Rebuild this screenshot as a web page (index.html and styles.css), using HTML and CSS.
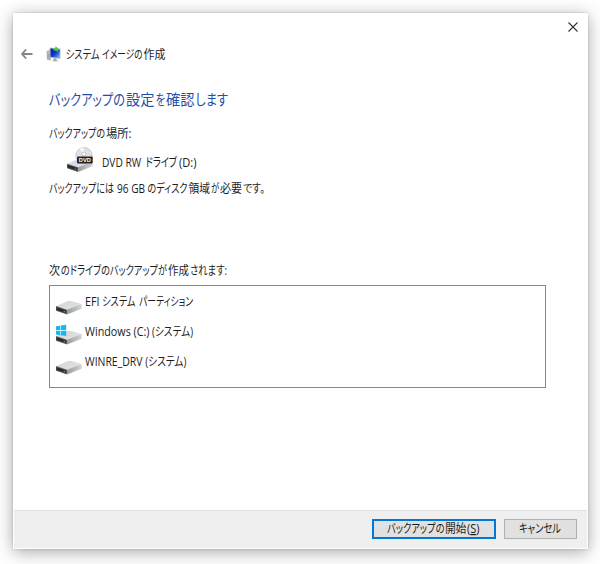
FILE: index.html
```html
<!DOCTYPE html>
<html lang="ja">
<head>
<meta charset="utf-8">
<title>システム イメージの作成</title>
<link rel="stylesheet" href="styles.css">
</head>
<body>
<svg width="0" height="0" class="defs" aria-hidden="true">
  <defs>
    <linearGradient id="top" x1="0" y1="0" x2="1" y2="1"><stop offset="0" stop-color="#d2d4d5"/><stop offset="1" stop-color="#e4e4e6"/></linearGradient>
    <linearGradient id="side" x1="0" y1="0" x2="1" y2="0"><stop offset="0" stop-color="#989a9b"/><stop offset="1" stop-color="#d2d3d4"/></linearGradient>
    <linearGradient id="screen" x1="0" y1="0" x2="1" y2="1"><stop offset="0" stop-color="#0719a5"/><stop offset=".5" stop-color="#1535c8"/><stop offset="1" stop-color="#70bff5"/></linearGradient>
    <symbol id="drive" viewBox="0 0 26 14">
      <path d="M0 5.6 12 0.2Q13 -.1 14 .1L25.6 3.4 11 9.4Z" fill="url(#top)"/>
      <path d="M11 9 25.6 3.4V8L11 13.8Z" fill="url(#side)"/>
      <path d="M0 5.4 11 9V13.7L0 10Z" fill="#5b5d5e"/>
      <path d="M.6 6.5 10.2 9.7V12.4L.6 9.3Z" fill="#292c2d"/>
      <path d="M7.7 10 9.1 10.4V11.6L7.7 11.2Z" fill="#38b637"/>
    </symbol>
  </defs>
</svg>
<main class="dialog">
  <header>
    <div class="closebar">
      <svg class="close" width="10" height="10" viewBox="0 0 10 10"><path d="M.5.5 9.5 9.5M9.5.5.5 9.5" fill="none" stroke="#333" stroke-width="1.1"/></svg>
    </div>
    <div class="caption">
      <svg class="back" width="12" height="10" viewBox="0 0 12 10"><path d="M5.2.5.9 5 5.2 9.5M1 5H11.5" fill="none" stroke="#858585" stroke-width="1.8"/></svg>
      <svg class="app" width="16" height="16" viewBox="0 0 16 16">
        <path d="M.5 5 3.5 4 5 5V14.5L1 13.8Z" fill="#b3b5b5"/><path d="M1 9H4M1 11H4" stroke="#858989" stroke-width=".7"/>
        <path d="M3.5 1.5 14.5 2.5V13L3.5 11.7Z" fill="#b9c3cc"/><path d="M4.5 2.5 13.7 3.4V12L4.5 10.8Z" fill="url(#screen)"/>
        <path d="M7.5 12.3H10.5V14L13 15.3H6L7.5 14Z" fill="#a5a8aa"/>
        <path d="M7.2 4.5Q7.5 1.7 9.5 1.5V0L13 3.3 10.8 6.7V4.8Q9 4.4 7.2 4.5Z" fill="#52cf3f"/>
      </svg>
      <svg class="line" width="102" height="18"><text x=".5" y="13" textLength="34">システム</text><text x="37" y="13" textLength="40.5">イメージの</text><text x="78.5" y="13" textLength="22">作成</text></svg>
    </div>
  </header>
  <section class="content">
    <h1><svg class="line" width="182" height="20"><text x="0" y="14" textLength="76">バックアップの</text><text x="77" y="14" textLength="28.5">設定</text><text x="106.5" y="14" textLength="9.5">を</text><text x="117" y="14" textLength="28.5">確認</text><text x="146.5" y="14" textLength="32.5">します</text></svg></h1>
    <p class="place"><svg class="line" width="90" height="18"><text x="0" y="13.5" textLength="56">バックアップの</text><text x="57" y="13.5" textLength="25.5">場所:</text></svg></p>
    <div class="destination">
      <svg width="27" height="26" viewBox="0 0 27 26">
        <use href="#drive" x="0" y="11.3" width="26" height="14"/>
        <circle cx="17" cy="8.7" r="8.2" fill="#dfe1e2" stroke="#b8babb" stroke-width=".7"/>
        <path d="M17 8 12.5 1.8A8 8 0 0 1 17 .8Z" fill="#f6f6f6"/>
        <circle cx="17" cy="7" r="2" fill="#fff" stroke="#aaadae" stroke-width=".7"/>
        <rect x="10" y="9.5" width="15.7" height="7" rx="1" fill="#222425"/>
        <text x="11.8" y="15.2" class="disc-label" textLength="12">DVD</text>
      </svg>
      <svg class="line" width="96" height="18"><text x="0" y="12.5" textLength="39">DVD RW</text><text x="43.5" y="12.5" textLength="31.5">ドライブ</text><text x="77" y="12.5" textLength="17.5">(D:)</text></svg>
    </div>
    <p class="space"><svg class="line" width="220" height="18"><text x="0" y="12.5" textLength="65">バックアップには</text><text x="68" y="12.5" textLength="28">96 GB</text><text x="98.5" y="12.5" textLength="40">のディスク</text><text x="139.5" y="12.5" textLength="21.5">領域</text><text x="162" y="12.5" textLength="8.2">が</text><text x="171" y="12.5" textLength="22">必要</text><text x="194" y="12.5" textLength="22">です。</text></svg></p>
    <p class="next"><svg class="line" width="182" height="18"><text x="0" y="13" textLength="11">次</text><text x="12" y="13" textLength="106">のドライブのバックアップが</text><text x="119" y="13" textLength="21">作成</text><text x="141" y="13" textLength="37">されます:</text></svg></p>
    <ul>
      <li><svg width="26" height="22" viewBox="0 0 26 22"><use href="#drive" y="7.7" width="26" height="14"/></svg><svg class="line" width="112" height="18"><text x="0" y="13" textLength="14.5">EFI</text><text x="17" y="13" textLength="33.5">システム</text><text x="54" y="13" textLength="54">パーティション</text></svg></li>
      <li><svg width="26" height="22" viewBox="0 0 26 22"><use href="#drive" y="7.7" width="26" height="14"/><path d="M0 3.3 4.3 2.7V7.1H0ZM4.9 2.6 10.2 1.8V7.1H4.9ZM0 7.7H4.3V12.2L0 11.6ZM4.9 7.7H10.2V13L4.9 12.3Z" fill="#12baf0"/></svg><svg class="line" width="112" height="18"><text x="0" y="13" textLength="64.5">Windows (C:)</text><text x="67" y="13" textLength="41">(システム)</text></svg></li>
      <li><svg width="26" height="22" viewBox="0 0 26 22"><use href="#drive" y="7.7" width="26" height="14"/></svg><svg class="line" width="112" height="18"><text x="0" y="13" textLength="57.5">WINRE_DRV</text><text x="60.3" y="13" textLength="41">(システム)</text></svg></li>
    </ul>
  </section>
  <footer>
    <button class="primary"><svg class="line" width="94" height="16"><text x="0" y="12" textLength="57.5">バックアップの</text><text x="58.3" y="12" textLength="21">開始</text><text x="80" y="12" textLength="12.5">(<tspan class="key">S</tspan>)</text></svg></button>
    <button class="cancel"><svg class="line" width="43" height="16"><text x="0" y="12" textLength="42">キャンセル</text></svg></button>
  </footer>
</main>
<script src="text.js"></script>
</body>
</html>
```
FILE: text.js
```js
// Condense glyphs together with their spacing.
document.querySelectorAll('text[textLength]').forEach(function (t) {
  t.setAttribute('lengthAdjust', 'spacingAndGlyphs');
});
```
FILE: styles.css
```css
* { box-sizing: border-box; }
body { margin: 0; padding: 13px 12px 15px 13px; height: 564px; overflow: hidden; background: #fff; font: 12px/18px "Open Sans", "Noto Sans CJK JP", sans-serif; color: #1c1c1c; }
.defs { position: absolute; }
svg { display: block; flex: none; }
.line { overflow: visible; fill: currentColor; font-feature-settings: "palt"; }
.dialog { width: 575px; height: 536px; display: flex; flex-direction: column; background: #fff; box-shadow: 0 0 2px rgba(0,0,0,.2), 0 3px 16px rgba(0,0,0,.35); }
.closebar { height: 28px; padding: 9px 10px 0 0; display: flex; justify-content: flex-end; }
.caption { height: 28px; display: flex; align-items: center; padding-left: 8px; }
.back { margin-top: -2px; }
.app { margin: -2px 3px 0 13px; }
.content { flex: 1; padding: 22px 0 0 36px; }
h1, p, ul { margin: 0; padding: 0; }
h1 { height: 33px; font-size: 15px; font-weight: 400; color: #1f4fa8; }
.place { height: 22px; }
.destination { height: 34px; display: flex; padding-left: 18px; gap: 8px; }
.destination svg { margin-top: 1px; }
.destination .line { margin-top: 8px; }
.disc-label { font: bold 5.5px "Liberation Sans", sans-serif; fill: #fff; }
.space { height: 82px; }
.next { height: 23px; }
ul { width: 497px; height: 103px; border: 1px solid #828790; padding: 7px 0 0 6px; list-style: none; }
li { height: 30px; display: flex; gap: 3px; }
footer { height: 38px; margin: 0 1px 1px; border-top: 1px solid #e2e2e2; background: #efefef; display: flex; justify-content: flex-end; gap: 8px; padding: 8px 10px 0 0; }
button { height: 20px; padding: 0; display: flex; align-items: center; justify-content: center; font: inherit; color: #1c1c1c; background: #e1e1e1; border: 1px solid #b0b0b0; border-radius: 0; }
.primary { width: 124px; border: 2px solid #0078d7; }
.cancel { width: 73px; }
.key { text-decoration: underline; }
```
